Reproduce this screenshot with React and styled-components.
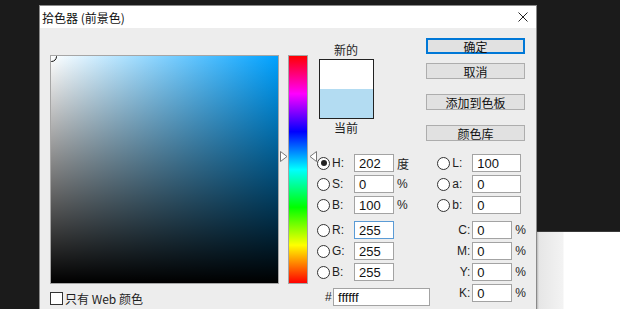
import React from 'react';
import styled, { createGlobalStyle } from 'styled-components';

const GlobalStyle = createGlobalStyle`
  html, body {
    margin: 0;
    padding: 0;
    overflow: hidden;
    background: #1b1b1b;
  }
  * { box-sizing: border-box; }
`;

const HUE = 202;

const Page = styled.div`
  display: flex;
  width: 620px;
  height: 309px;
  overflow: hidden;
  padding: 5px 0 0 39px;
  background: #1b1b1b;
  font-family: "Liberation Sans", "Noto Sans CJK SC", sans-serif;
  font-size: 12px;
  color: #1e1e1e;
`;

const Dialog = styled.div`
  flex-shrink: 0;
  width: 498px;
  height: 330px;
  border: 1px solid #8a8a8a;
  background: #ededed;
  display: flex;
  flex-direction: column;
`;

const TitleBar = styled.div`
  height: 22px;
  flex-shrink: 0;
  background: #fff;
  display: flex;
  align-items: center;
  justify-content: space-between;
  padding: 0 8px 0 2px;
  font-family: "Noto Sans CJK SC", sans-serif;
  font-size: 12px;
  color: #111;
`;

const CloseButton = styled.div`
  width: 10px;
  height: 10px;
  display: flex;
  svg { display: block; }
`;

const Body = styled.div`
  display: flex;
  padding: 10px 10px 0 10px;
`;

const FieldColumn = styled.div`
  display: flex;
  flex-direction: column;
  padding-top: 17px;
`;

const ColorField = styled.div`
  position: relative;
  width: 229px;
  height: 229px;
  border: 1px solid #a6a6a6;
  overflow: hidden;
  background:
    linear-gradient(to bottom, rgba(0,0,0,0), #000),
    linear-gradient(to right, #fff, hsl(${p => p.$hue}, 100%, 50%));
`;

const Marker = styled.div`
  position: absolute;
  left: -5px;
  top: -5px;
  width: 11px;
  height: 11px;
  border-radius: 50%;
  border: 1px solid #111;
`;

const CheckRow = styled.label`
  display: flex;
  align-items: center;
  margin-top: 6px;
  font-family: "Noto Sans CJK SC", sans-serif;
  font-size: 12px;
  color: #1e1e1e;
  gap: 1px;
`;

const CheckBox = styled.span`
  width: 13px;
  height: 13px;
  border: 1px solid #333;
  background: #fff;
  margin-right: 1px;
`;

const HueColumn = styled.div`
  position: relative;
  margin-left: 9px;
  padding-top: 17px;
`;

const HueBar = styled.div`
  width: 20px;
  height: 229px;
  border: 1px solid #a6a6a6;
  background: linear-gradient(to bottom,
    #ff0000 0%, #ff00ff 16.66%, #0000ff 33.33%, #00ffff 50%,
    #00ff00 66.66%, #ffff00 83.33%, #ff0000 100%);
`;

const Arrow = styled.svg`
  position: absolute;
  top: ${p => p.$top}px;
  ${p => (p.$side === 'left' ? 'left: -8px;' : 'right: -9px;')}
`;

const RightSection = styled.div`
  margin-left: 9px;
  width: 209px;
  display: flex;
  flex-direction: column;
`;

const TopArea = styled.div`
  height: 116px;
  display: flex;
`;

const SwatchColumn = styled.div`
  width: 56px;
  margin-left: 1px;
  display: flex;
  flex-direction: column;
  align-items: center;
  padding-top: 3px;
`;

const SwatchLabel = styled.div`
  height: 18px;
  line-height: 18px;
  font-family: "Noto Sans CJK SC", sans-serif;
  font-size: 12px;
`;

const Swatch = styled.div`
  width: 55px;
  height: 60px;
  border: 1px solid #222;
  display: flex;
  flex-direction: column;
`;

const SwatchHalf = styled.div`
  flex: 1;
  background: ${p => p.$color};
`;

const ButtonColumn = styled.div`
  margin-left: auto;
  margin-right: 1px;
  width: 99px;
  display: flex;
  flex-direction: column;
`;

const Button = styled.div`
  height: 16px;
  margin-top: ${p => p.$gap}px;
  background: #e1e1e1;
  border: 1px solid ${p => (p.$primary ? '#0078d7' : '#adadad')};
  box-shadow: ${p => (p.$primary ? 'inset 0 0 0 1px #0078d7' : 'none')};
  display: flex;
  align-items: center;
  justify-content: center;
  font-family: "Noto Sans CJK SC", sans-serif;
  font-size: 12px;
  color: #111;
`;

const FieldsArea = styled.div`
  display: flex;
`;

const LeftFields = styled.div`
  width: 121px;
  display: flex;
  flex-direction: column;
`;

const RightFields = styled.div`
  flex: 1;
  display: flex;
  flex-direction: column;
`;

const Row = styled.div`
  display: flex;
  align-items: center;
  height: 18px;
  margin-bottom: 3px;
  margin-top: ${p => p.$extra || 0}px;
`;

const Radio = styled.span`
  position: relative;
  width: 13px;
  height: 13px;
  border-radius: 50%;
  border: 1px solid #333;
  background: #fff;
  flex-shrink: 0;
  margin-right: 2px;

  &::after {
    content: '';
    display: ${p => (p.$checked ? 'block' : 'none')};
    position: absolute;
    left: 2.5px;
    top: 2.5px;
    width: 6px;
    height: 6px;
    border-radius: 50%;
    background: #222;
  }
`;

const Label = styled.span`
  width: ${p => p.$w}px;
  text-align: ${p => p.$align || 'left'};
  padding-right: ${p => (p.$align === 'right' ? 2 : 0)}px;
  font-size: 12px;
  flex-shrink: 0;
`;

const Input = styled.div`
  width: ${p => p.$w}px;
  height: 18px;
  flex-shrink: 0;
  background: #fff;
  border: 1px solid ${p => (p.$focus ? '#5b9bd5' : '#a3a3a3')};
  padding-left: 4px;
  display: flex;
  align-items: center;
  font-size: 13px;
  color: #111;
`;

const Unit = styled.span`
  margin-left: 3px;
  font-family: "Liberation Sans", "Noto Sans CJK SC", sans-serif;
  font-size: 12px;
`;

const HexRow = styled.div`
  display: flex;
  align-items: center;
  height: 18px;
  margin-top: 4px;
  padding-left: 8px;
  gap: 3px;
`;

const BackPanel = styled.div`
  flex: 1;
  margin-top: 226px;
  border-top: 1px solid #3a3a3a;
  background: linear-gradient(to right, #b9b9b9 0px, #e6e6e6 2px, #f3f3f3 26px, #fff 27px);
`;

const hsbRows = [
  { key: 'H', value: '202', unit: '度', checked: true },
  { key: 'S', value: '0', unit: '%' },
  { key: 'B', value: '100', unit: '%' },
];

const rgbRows = [
  { key: 'R', value: '255', focus: true },
  { key: 'G', value: '255' },
  { key: 'B', value: '255' },
];

const labRows = [
  { key: 'L', value: '100' },
  { key: 'a', value: '0' },
  { key: 'b', value: '0' },
];

const cmykRows = ['C', 'M', 'Y', 'K'];

const buttons = [
  { text: '确定', gap: 0, primary: true },
  { text: '取消', gap: 9 },
  { text: '添加到色板', gap: 15 },
  { text: '颜色库', gap: 15 },
];

export default function App() {
  const arrowTop = 17 + Math.round((1 - HUE / 360) * 229) - 5;

  return (
    <Page>
      <GlobalStyle />
      <Dialog>
        <TitleBar>
          <span>拾色器 (前景色)</span>
          <CloseButton>
            <svg width="10" height="10" viewBox="0 0 10 10">
              <path d="M0.5 0.5 L9.5 9.5 M9.5 0.5 L0.5 9.5" stroke="#222" strokeWidth="1" />
            </svg>
          </CloseButton>
        </TitleBar>
        <Body>
          <FieldColumn>
            <ColorField $hue={HUE}>
              <Marker />
            </ColorField>
            <CheckRow>
              <CheckBox />
              <span>只有 Web 颜色</span>
            </CheckRow>
          </FieldColumn>

          <HueColumn>
            <HueBar />
            <Arrow $side="left" $top={arrowTop} width="8" height="11" viewBox="0 0 8 11">
              <path d="M0.5 0.5 L7 5.5 L0.5 10.5 Z" fill="#fff" stroke="#777" />
            </Arrow>
            <Arrow $side="right" $top={arrowTop} width="8" height="11" viewBox="0 0 8 11">
              <path d="M7.5 0.5 L1 5.5 L7.5 10.5 Z" fill="#fff" stroke="#777" />
            </Arrow>
          </HueColumn>

          <RightSection>
            <TopArea>
              <SwatchColumn>
                <SwatchLabel>新的</SwatchLabel>
                <Swatch>
                  <SwatchHalf $color="#ffffff" />
                  <SwatchHalf $color="#b3dcf2" />
                </Swatch>
                <SwatchLabel>当前</SwatchLabel>
              </SwatchColumn>
              <ButtonColumn>
                {buttons.map(b => (
                  <Button key={b.text} $gap={b.gap} $primary={b.primary}>{b.text}</Button>
                ))}
              </ButtonColumn>
            </TopArea>

            <FieldsArea>
              <LeftFields>
                {hsbRows.map(r => (
                  <Row key={r.key}>
                    <Radio $checked={r.checked} />
                    <Label $w={22}>{r.key}:</Label>
                    <Input $w={40}>{r.value}</Input>
                    <Unit>{r.unit}</Unit>
                  </Row>
                ))}
                {rgbRows.map((r, i) => (
                  <Row key={r.key + i} $extra={i === 0 ? 4 : 0}>
                    <Radio />
                    <Label $w={22}>{r.key}:</Label>
                    <Input $w={40} $focus={r.focus}>{r.value}</Input>
                  </Row>
                ))}
                <HexRow>
                  <Label $w={5}>#</Label>
                  <Input $w={97}>ffffff</Input>
                </HexRow>
              </LeftFields>

              <RightFields>
                {labRows.map(r => (
                  <Row key={r.key}>
                    <Radio />
                    <Label $w={20}>{r.key}:</Label>
                    <Input $w={49}>{r.value}</Input>
                  </Row>
                ))}
                {cmykRows.map((k, i) => (
                  <Row key={k} $extra={i === 0 ? 4 : 0}>
                    <Label $w={35} $align="right">{k}:</Label>
                    <Input $w={40}>0</Input>
                    <Unit>%</Unit>
                  </Row>
                ))}
              </RightFields>
            </FieldsArea>
          </RightSection>
        </Body>
      </Dialog>
      <BackPanel />
    </Page>
  );
}
